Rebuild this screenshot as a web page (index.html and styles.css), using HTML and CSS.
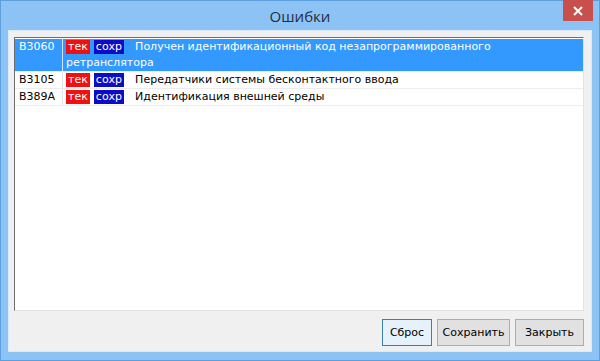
FILE: index.html
```html
<!DOCTYPE html>
<html lang="ru">
<head>
    <meta charset="UTF-8">
    <title>Ошибки</title>
    <link rel="stylesheet" href="styles.css">
</head>
<body>
    <div class="window">
        <div class="titlebar">
            <span class="title">Ошибки</span>
            <a class="close-button" href="#">
                <svg width="10" height="10" viewBox="0 0 10 10"><path d="M1 1L9 9M9 1L1 9" stroke="#fff" stroke-width="2"/></svg>
            </a>
        </div>

        <div class="client">
            <div class="error-list">
                <div class="row selected">
                    <div class="code">B3060</div>
                    <div class="desc"><span class="tag cur">тек</span><span class="tag saved">сохр</span>Получен идентификационный код незапрограммированного ретранслятора</div>
                </div>
                <div class="row">
                    <div class="code">B3105</div>
                    <div class="desc"><span class="tag cur">тек</span><span class="tag saved">сохр</span>Передатчики системы бесконтактного ввода</div>
                </div>
                <div class="row">
                    <div class="code">B389A</div>
                    <div class="desc"><span class="tag cur">тек</span><span class="tag saved">сохр</span>Идентификация внешней среды</div>
                </div>
            </div>

            <div class="buttons">
                <button class="btn btn-reset default">Сброс</button>
                <button class="btn btn-save">Сохранить</button>
                <button class="btn btn-close">Закрыть</button>
            </div>
        </div>
    </div>
</body>
</html>
```

FILE: styles.css
```css
* {
    margin: 0;
    padding: 0;
    box-sizing: border-box;
}

body {
    background-color: #fff;
    font-family: 'DejaVu Sans', 'Liberation Sans', sans-serif;
}

.window {
    width: 600px;
    height: 361px;
    background-color: #8cc3f4;
    border: 1px solid #5d9fdc;
    display: flex;
    flex-direction: column;
}

.titlebar {
    height: 29px;
    position: relative;
    display: flex;
    justify-content: center;
    align-items: center;
}

.title {
    font-family: 'Open Sans', 'Liberation Sans', sans-serif;
    font-size: 15px;
    color: #1f2d44;
}

.close-button {
    position: absolute;
    top: -1px;
    right: 6px;
    width: 30px;
    height: 21px;
    background-color: #c7504d;
    display: flex;
    justify-content: center;
    align-items: center;
}

.client {
    flex: 1;
    margin: 0 7px 8px 7px;
    background-color: #f0f0f0;
    border: 1px solid #d9ebfa;
    padding: 6px 7px 5px 5px;
    display: flex;
    flex-direction: column;
}

.error-list {
    flex: 1;
    background-color: #fff;
    border-top: 1px solid #6e6e6e;
    border-left: 1px solid #6e6e6e;
    border-right: 1px solid #e3e3e3;
    border-bottom: 1px solid #e3e3e3;
    padding-top: 1px;
}

.row {
    display: flex;
    font-size: 11px;
    line-height: 16px;
    color: #000;
    border-bottom: 1px solid #ececec;
}

.row.selected {
    background-color: #3399ff;
    color: #fff;
}

.code {
    width: 48px;
    flex-shrink: 0;
    padding-left: 4px;
    border-right: 1px solid #e6e6e6;
}

.row.selected .code {
    border-right-color: #cfe5fb;
}

.desc {
    flex: 1;
    padding-left: 3px;
    padding-right: 30px;
}

.tag {
    display: inline-block;
    color: #fff;
    line-height: 13px;
    padding: 0 2px 1px 2px;
    margin-right: 4px;
}

.tag.cur {
    background-color: #f01010;
}

.tag.saved {
    background-color: #0c0cc6;
    margin-right: 11px;
}

.buttons {
    display: flex;
    justify-content: flex-end;
    gap: 5px;
    padding-top: 8px;
}

.btn {
    height: 27px;
    font-family: 'DejaVu Sans', 'Liberation Sans', sans-serif;
    font-size: 11px;
    color: #000;
    background-color: #e1e1e1;
    border: 1px solid #adadad;
}

.btn-reset {
    width: 50px;
}

.btn-save {
    width: 73px;
}

.btn-close {
    width: 69px;
}

.btn.default {
    background-color: #e5f1fb;
    border-color: #3c7fb1;
}
```
